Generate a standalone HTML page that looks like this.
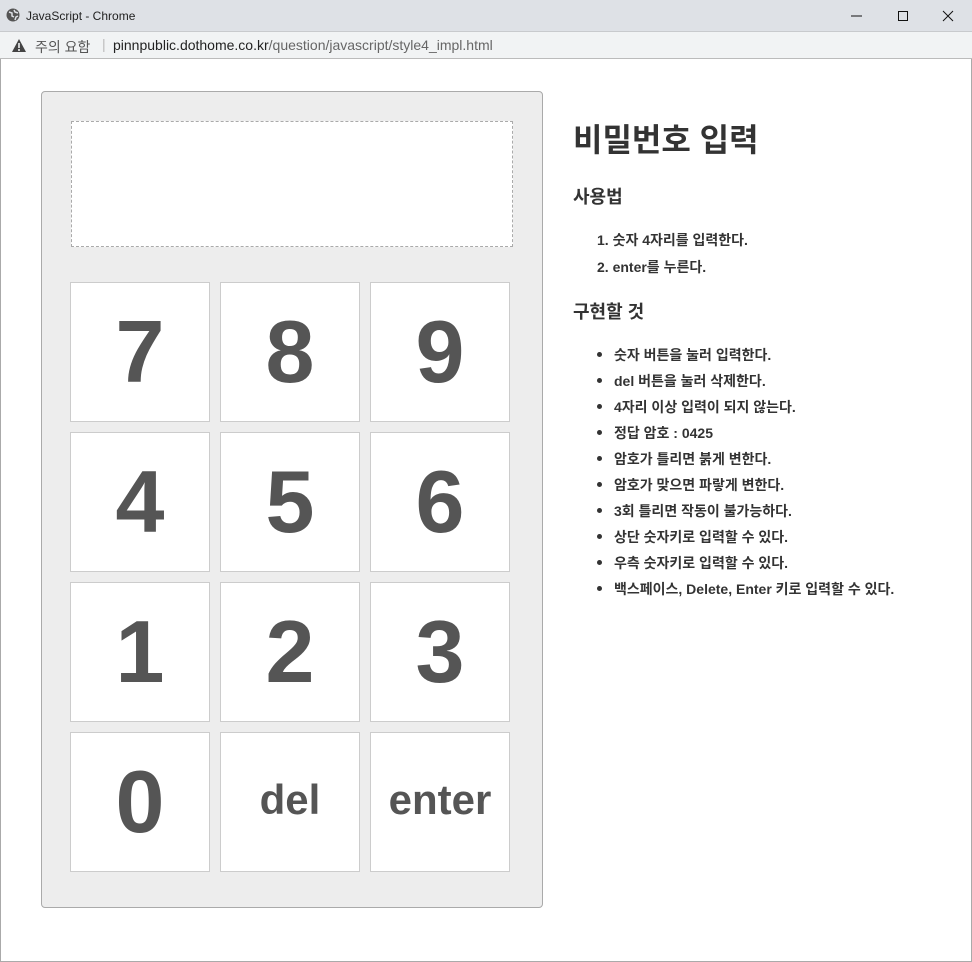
<!DOCTYPE html>
<html><head><meta charset="utf-8"><style>
*{margin:0;padding:0;box-sizing:border-box}
body{width:972px;height:962px;background:#fff;font-family:"Liberation Sans","Noto Sans CJK KR",sans-serif;position:relative;overflow:hidden}
.fr{position:absolute;left:0;top:0;width:972px;height:962px;border:1px solid #aaa;border-top:none}
.tb{position:absolute;left:0;top:0;width:972px;height:32px;background:#dee1e6;border-bottom:1px solid #c8cacd}
.tb .t{position:absolute;left:26px;top:9px;font-size:12px;color:#222}
.ab{position:absolute;left:0;top:32px;width:972px;height:27px;background:#f1f3f4;border-bottom:1px solid #bbb}
.ab .u{position:absolute;left:113px;top:5px;font-size:14px;color:#666}
.ab .u b{font-weight:normal;color:#222}
.panel{position:absolute;left:41px;top:91px;width:502px;height:817px;background:#ededed;border:1px solid #aaa;border-radius:4px}
.disp{position:absolute;left:71px;top:121px;width:442px;height:126px;background:#fff;border:1px dashed #aaa}
.k{position:absolute;width:140px;height:140px;background:#fff;border:1px solid #ccc;color:#555;font-weight:bold;font-size:88px;display:flex;align-items:center;justify-content:center}
.k.s{font-size:42px;padding-bottom:4px}
.r{position:absolute;left:573px;color:#333}
h1{font-size:32px;color:#555;font-weight:bold}
h3{font-size:18px;font-weight:bold}
.li{font-size:14px;font-weight:bold;position:absolute;left:614px;color:#333;white-space:nowrap}
.dot{position:absolute;left:-17px;top:7px;width:5px;height:5px;border-radius:50%;background:#333}
</style></head><body>
<div class="fr"></div>
<div class="tb"><svg style="position:absolute;left:6px;top:8px" width="14" height="14"><circle cx="7" cy="7" r="6.5" fill="#555"/><path d="M3 4l3 1 0 3 2 1M8 2l1 2 3 1M9 12l1-3 2-1" stroke="#dee1e6" stroke-width="1.5" fill="none"/></svg><span class="t">JavaScript - Chrome</span>
<svg style="position:absolute;left:850px;top:8px" width="110" height="16"><path d="M1 8h11" stroke="#111"/><path d="M48.5 3.5h9v9h-9z" stroke="#111" fill="none"/><path d="M93 3l10 10M103 3l-10 10" stroke="#111"/></svg></div>
<div class="ab"><svg style="position:absolute;left:12px;top:7px" width="14" height="13"><path d="M7 0L14 13H0z" fill="#444"/><path d="M7 4v5M7 10v2" stroke="#f1f3f4" stroke-width="1.6"/></svg>
<span style="position:absolute;left:35px;top:5px;font-size:14px;color:#555">주의 요함</span><span style="position:absolute;left:102px;top:4px;font-size:14px;color:#bbb">|</span>
<span class="u"><b>pinnpublic.dothome.co.kr</b>/question/javascript/style4_impl.html</span></div>
<div class="panel"></div><div class="disp"></div>
<div class="k" style="left:70px;top:282px">7</div><div class="k" style="left:220px;top:282px">8</div><div class="k" style="left:370px;top:282px">9</div>
<div class="k" style="left:70px;top:432px">4</div><div class="k" style="left:220px;top:432px">5</div><div class="k" style="left:370px;top:432px">6</div>
<div class="k" style="left:70px;top:582px">1</div><div class="k" style="left:220px;top:582px">2</div><div class="k" style="left:370px;top:582px">3</div>
<div class="k" style="left:70px;top:732px">0</div><div class="k s" style="left:220px;top:732px">del</div><div class="k s" style="left:370px;top:732px">enter</div>
<h1 class="r" style="top:115px">비밀번호 입력</h1>
<h3 class="r" style="top:183px">사용법</h3>
<div class="li" style="top:230px;left:597px">1. 숫자 4자리를 입력한다.</div>
<div class="li" style="top:257px;left:597px">2. enter를 누른다.</div>
<h3 class="r" style="top:298px">구현할 것</h3>
<div class="li" style="top:345px"><i class="dot"></i>숫자 버튼을 눌러 입력한다.</div>
<div class="li" style="top:371px"><i class="dot"></i>del 버튼을 눌러 삭제한다.</div>
<div class="li" style="top:397px"><i class="dot"></i>4자리 이상 입력이 되지 않는다.</div>
<div class="li" style="top:423px"><i class="dot"></i>정답 암호 : 0425</div>
<div class="li" style="top:449px"><i class="dot"></i>암호가 틀리면 붉게 변한다.</div>
<div class="li" style="top:475px"><i class="dot"></i>암호가 맞으면 파랗게 변한다.</div>
<div class="li" style="top:501px"><i class="dot"></i>3회 틀리면 작동이 불가능하다.</div>
<div class="li" style="top:527px"><i class="dot"></i>상단 숫자키로 입력할 수 있다.</div>
<div class="li" style="top:553px"><i class="dot"></i>우측 숫자키로 입력할 수 있다.</div>
<div class="li" style="top:579px"><i class="dot"></i>백스페이스, Delete, Enter 키로 입력할 수 있다.</div>
</body></html>
